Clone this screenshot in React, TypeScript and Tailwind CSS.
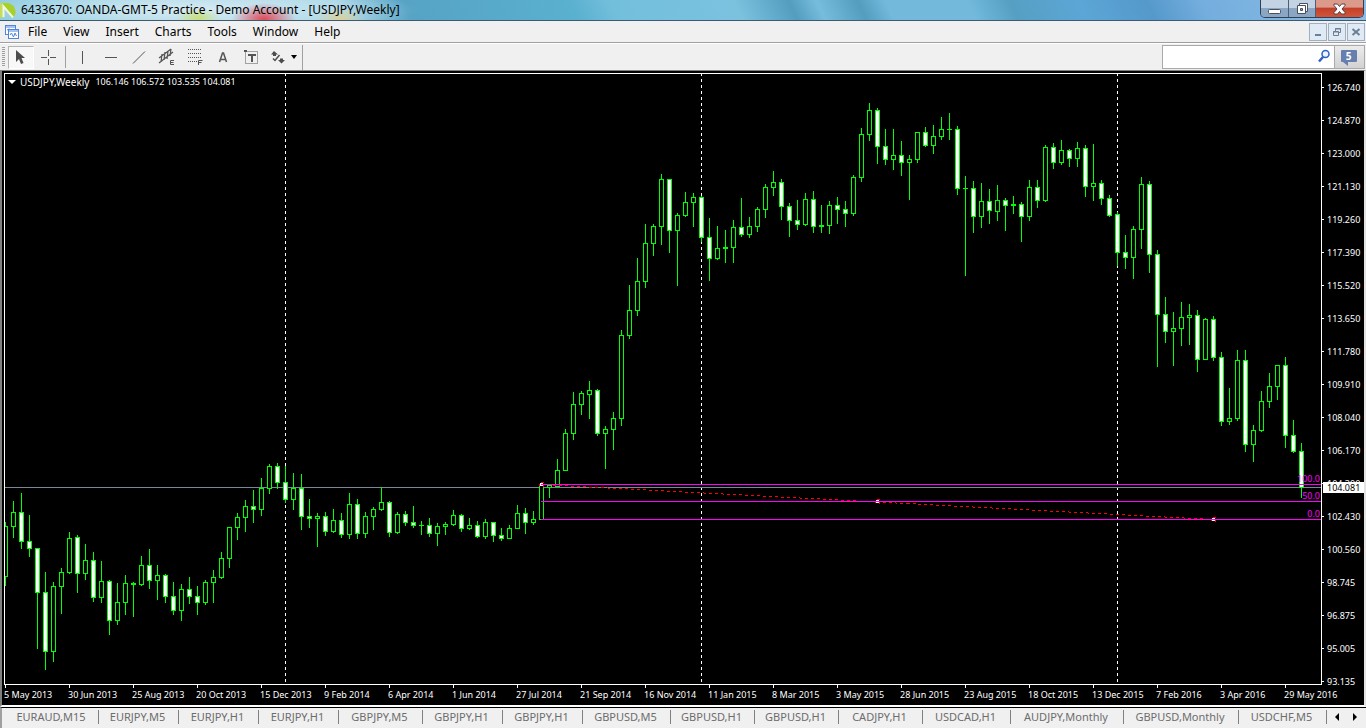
import React from 'react';

interface Tab {
    label: string;
    width: string;
}

// [high, bodyTop, bodyBottom, low, bearish] in chart rows
type Candle = [number, number, number, number, number];

const CANDLES: Candle[] = [
    [522, 526, 577, 586, 0], [501, 512, 527, 538, 0], [493, 512, 542, 549, 1], [515, 541, 549, 557, 1],
    [548, 548, 593, 649, 1], [572, 592, 652, 670, 1], [582, 586, 652, 662, 0], [568, 572, 587, 614, 0],
    [532, 538, 573, 574, 0], [535, 537, 574, 593, 1], [544, 560, 574, 580, 0], [552, 560, 598, 602, 1],
    [561, 581, 598, 603, 0], [580, 581, 621, 635, 1], [583, 602, 621, 625, 0], [575, 583, 603, 615, 0],
    [582, 583, 585, 617, 0], [556, 565, 585, 586, 0], [549, 565, 581, 589, 1], [565, 575, 581, 600, 0],
    [574, 575, 597, 603, 1], [582, 596, 611, 615, 1], [584, 589, 611, 621, 0], [577, 589, 597, 604, 1],
    [586, 596, 603, 615, 1], [580, 582, 603, 605, 0], [570, 577, 583, 603, 0], [552, 558, 578, 579, 0],
    [527, 527, 559, 568, 0], [513, 517, 528, 540, 0], [500, 506, 518, 532, 0], [490, 506, 510, 523, 1],
    [478, 488, 510, 516, 0], [464, 466, 489, 494, 0], [463, 466, 483, 489, 1], [466, 482, 500, 503, 1],
    [473, 488, 500, 510, 0], [474, 488, 517, 530, 1], [499, 516, 519, 528, 1], [513, 516, 519, 547, 0],
    [512, 516, 532, 536, 1], [509, 520, 532, 533, 0], [513, 520, 535, 538, 1], [493, 504, 535, 539, 0],
    [499, 504, 534, 539, 1], [512, 516, 534, 538, 0], [507, 509, 517, 530, 0], [487, 502, 510, 511, 0],
    [501, 502, 533, 537, 1], [512, 514, 533, 534, 0], [511, 514, 523, 526, 1], [506, 522, 526, 528, 1],
    [521, 525, 526, 535, 0], [518, 525, 534, 537, 1], [523, 526, 534, 546, 0], [522, 524, 527, 535, 0],
    [510, 515, 525, 526, 0], [514, 515, 529, 532, 1], [518, 525, 529, 530, 0], [521, 525, 537, 538, 1],
    [519, 522, 537, 539, 0], [522, 522, 536, 542, 1], [528, 535, 539, 541, 1], [525, 528, 539, 539, 0],
    [505, 513, 529, 529, 0], [508, 513, 523, 534, 1], [511, 519, 523, 525, 0], [484, 484, 520, 520, 0],
    [484, 485, 488, 498, 0], [459, 470, 487, 487, 0], [429, 433, 471, 471, 0], [392, 404, 434, 440, 0],
    [391, 393, 405, 415, 0], [381, 390, 395, 419, 0], [389, 390, 434, 436, 1], [426, 429, 434, 469, 0],
    [412, 418, 430, 450, 0], [330, 335, 419, 426, 0], [285, 310, 336, 339, 0], [258, 281, 311, 316, 0],
    [224, 243, 282, 288, 0], [224, 226, 244, 256, 0], [174, 179, 227, 245, 0], [179, 179, 231, 253, 1],
    [213, 215, 231, 286, 0], [192, 202, 216, 217, 0], [193, 197, 203, 227, 0], [196, 197, 238, 242, 1],
    [218, 237, 259, 281, 1], [226, 248, 259, 260, 0], [230, 247, 249, 263, 0], [220, 227, 248, 263, 0],
    [198, 227, 235, 237, 1], [217, 226, 235, 238, 0], [207, 209, 227, 232, 0], [184, 187, 210, 218, 0],
    [171, 182, 188, 196, 0], [179, 182, 207, 220, 1], [203, 206, 221, 237, 1], [200, 220, 225, 230, 1],
    [193, 199, 225, 226, 0], [191, 199, 227, 233, 1], [205, 225, 227, 233, 0], [201, 205, 226, 234, 0],
    [197, 205, 210, 224, 1], [201, 209, 214, 227, 1], [175, 177, 214, 216, 0], [128, 134, 178, 182, 0],
    [103, 110, 135, 141, 0], [108, 110, 147, 164, 1], [129, 146, 160, 165, 1], [129, 155, 160, 170, 0],
    [141, 155, 163, 176, 1], [155, 159, 163, 200, 0], [132, 132, 160, 163, 0], [127, 132, 146, 147, 1],
    [125, 136, 146, 154, 0], [117, 129, 137, 140, 0], [113, 129, 130, 140, 0], [126, 129, 189, 195, 1],
    [176, 188, 189, 276, 0], [181, 188, 217, 233, 1], [183, 201, 217, 228, 0], [189, 201, 211, 224, 1],
    [185, 200, 212, 221, 0], [198, 200, 206, 231, 1], [196, 204, 206, 214, 0], [202, 204, 217, 242, 1],
    [180, 187, 217, 221, 0], [180, 187, 201, 208, 1], [145, 147, 201, 202, 0], [143, 147, 163, 169, 1],
    [140, 150, 163, 165, 0], [149, 150, 159, 167, 1], [142, 148, 159, 167, 0], [145, 148, 187, 197, 1],
    [144, 183, 187, 201, 0], [180, 183, 199, 205, 1], [195, 198, 216, 217, 1], [212, 214, 253, 266, 1],
    [235, 252, 258, 269, 1], [226, 229, 258, 279, 0], [177, 184, 230, 249, 0], [181, 184, 255, 273, 1],
    [250, 254, 315, 367, 1], [297, 314, 332, 343, 1], [312, 328, 332, 366, 0], [302, 317, 329, 346, 0],
    [304, 315, 318, 345, 0], [310, 315, 360, 372, 1], [318, 319, 360, 360, 0], [316, 319, 358, 361, 1],
    [352, 357, 422, 426, 1], [388, 418, 422, 425, 0], [350, 360, 419, 421, 0], [350, 360, 445, 452, 1],
    [425, 430, 445, 462, 0], [391, 401, 431, 432, 0], [373, 386, 402, 408, 0], [365, 365, 387, 400, 0],
    [357, 365, 436, 448, 1], [420, 435, 452, 453, 1], [443, 451, 488, 498, 1],
];

const MENUS = ['File', 'View', 'Insert', 'Charts', 'Tools', 'Window', 'Help'];

const PRICES = [
    '126.740', '124.870', '123.000', '121.130', '119.260', '117.390', '115.520', '113.650', '111.780', '109.910',
    '108.040', '106.170', '104.300', '102.430', '100.560', '98.745', '96.875', '95.005', '93.135',
];

const DATES = [
    '5 May 2013', '30 Jun 2013', '25 Aug 2013', '20 Oct 2013', '15 Dec 2013', '9 Feb 2014', '6 Apr 2014',
    '1 Jun 2014', '27 Jul 2014', '21 Sep 2014', '16 Nov 2014', '11 Jan 2015', '8 Mar 2015', '3 May 2015',
    '28 Jun 2015', '23 Aug 2015', '18 Oct 2015', '13 Dec 2015', '7 Feb 2016', '3 Apr 2016', '29 May 2016',
];

const TABS: Tab[] = [
    { label: 'EURAUD,M15', width: 'w-[93px]' },
    { label: 'EURJPY,M5', width: 'w-[80px]' },
    { label: 'EURJPY,H1', width: 'w-[80px]' },
    { label: 'EURJPY,H1', width: 'w-[80px]' },
    { label: 'GBPJPY,M5', width: 'w-[84px]' },
    { label: 'GBPJPY,H1', width: 'w-[80px]' },
    { label: 'GBPJPY,H1', width: 'w-[80px]' },
    { label: 'GBPUSD,M5', width: 'w-[88px]' },
    { label: 'GBPUSD,H1', width: 'w-[84px]' },
    { label: 'GBPUSD,H1', width: 'w-[84px]' },
    { label: 'CADJPY,H1', width: 'w-[84px]' },
    { label: 'USDCAD,H1', width: 'w-[88px]' },
    { label: 'AUDJPY,Monthly', width: 'w-[113px]' },
    { label: 'GBPUSD,Monthly', width: 'w-[115px]' },
    { label: 'USDCHF,M5', width: 'w-[88px]' },
];

const TitleBar: React.FC = () => (
    <header className="flex h-[21px] shrink-0 items-start border-b border-[#3c5a70] bg-[linear-gradient(65deg,#8ccbe0_0%,#a9d6e6_15%,#a5d5e6_25%,#56a3c5_30%,#5ab0cf_42%,#72bfdc_45%,#7bc2df_54%,#549dbf_58%,#76bcdc_60%,#549dbf_63%,#72b9dc_65%,#72b9dc_71%,#569fc3_74%,#5ba6d6_79%,#5599cb_84%,#74aede_88%,#8dbde4_100%)] pr-[2px]">
        <div className="flex h-5 flex-1 items-center bg-[radial-gradient(ellipse_22px_10px_at_198px_18px,#c9df7a,transparent),radial-gradient(ellipse_32px_16px_at_264px_19px,#e04a5a,transparent),radial-gradient(ellipse_24px_10px_at_340px_18px,#d9cf9c,transparent),radial-gradient(ellipse_230px_22px_at_190px_10px,#e2f1f7cc,transparent)]">
            <svg width="16" height="20" viewBox="0 0 16 20" className="mr-[5px]">
                <path d="M0 3.500C7 1 15 4 15.500 11C16 14 14 17 12 18L3 7.500V18L0 17z" fill="#a9cf2a" />
                <path d="M0 3.500L3 3v15l-3-1z" fill="#c2de5c" />
                <path d="M3.500 17V6.500L13 17.500" fill="none" stroke="#f2f8e4" strokeWidth="2" />
            </svg>
            <h1 className="whitespace-nowrap font-['Noto_Sans'] text-[12px] leading-5 text-black">
                6433670: OANDA-GMT-5 Practice - Demo Account - [USDJPY,Weekly]
            </h1>
        </div>
        <div className="flex h-[18px] w-[104px] overflow-hidden rounded-b-[5px] border border-t-0 border-[#2e3f56]">
            <button aria-label="Minimize" className="flex w-7 items-center justify-center border-r border-[#4b5f78] bg-linear-to-b from-[#c3d3e3] from-45% to-[#8ba6c2] to-50%">
                <svg width="13" height="14" viewBox="0 0 13 14">
                    <rect x="0.5" y="7.5" width="12" height="4" rx="1" fill="#fff" stroke="#4a4f5c" />
                </svg>
            </button>
            <button aria-label="Restore" className="flex w-[27px] items-center justify-center border-r border-[#4b5f78] bg-linear-to-b from-[#c3d3e3] from-45% to-[#8ba6c2] to-50%">
                <svg width="13" height="14" viewBox="0 0 13 14">
                    <path d="M3.500 1.500h8v8h-8z" fill="#fff" stroke="#4a4f5c" />
                    <path d="M1.500 3.500h8v8h-8z" fill="#fff" stroke="#4a4f5c" />
                    <path d="M4.500 6.500h2v2h-2z" fill="#8ba6c2" stroke="#4a4f5c" />
                </svg>
            </button>
            <button aria-label="Close" className="flex flex-1 items-center justify-center bg-linear-to-b from-[#dc9a8b] from-40% via-[#c3402a] via-50% to-[#d0553a]">
                <svg width="13" height="12" viewBox="0 0 13 12">
                    <path d="M1 1h3.500L6.500 3.500 8.500 1H12v1.500L9 6l3 3.500V11H8.500l-2-2.500L4.500 11H1V9.500L4 6 1 2.500z" fill="#fff" stroke="#53404a" />
                </svg>
            </button>
        </div>
    </header>
);

const MenuBar: React.FC = () => (
    <nav className="flex h-[22px] shrink-0 items-center border-b border-[#a0a0a0] bg-[#f0f0f0] pl-[5px] pr-px">
        <svg width="14" height="14" viewBox="0 0 14 14" fill="none" stroke="#4f86dc">
            <rect x="0.500" y="0.500" width="10" height="9" fill="#fff" />
            <path d="M1 2h9M2 5l2-1 2 1" />
            <rect x="3.500" y="4.500" width="10" height="9" fill="#fff" />
            <path d="M4 6h9M5 10l1.500-2 2 4 1.500-4 1.500 3" />
        </svg>
        <ul className="flex flex-1 pl-[9px] font-['Noto_Sans'] text-[12px] leading-5 text-black">
            {MENUS.map((menu) => (
                <li key={menu} className="pr-4">
                    <button className="block">{menu}</button>
                </li>
            ))}
        </ul>
        <div className="flex gap-px">
            <button aria-label="Minimize chart" className="flex h-[18px] w-[18px] items-center justify-center border border-[#9fb0c2] bg-[#dfeaf5]">
                <svg width="12" height="12" viewBox="0 0 12 12">
                    <path d="M3 9h6" stroke="#6b7f95" strokeWidth="2" />
                </svg>
            </button>
            <button aria-label="Restore chart" className="flex h-[18px] w-[18px] items-center justify-center border border-[#9fb0c2] bg-[#dfeaf5]">
                <svg width="12" height="12" viewBox="0 0 12 12" fill="none" stroke="#6b7f95">
                    <path d="M4.500 5V2.500h5v4H8M4 3h6" />
                    <path d="M2.500 5.500h5v4h-5zM2 6h6" />
                </svg>
            </button>
            <button aria-label="Close chart" className="flex h-[18px] w-[18px] items-center justify-center border border-[#9fb0c2] bg-[#dfeaf5]">
                <svg width="12" height="12" viewBox="0 0 12 12">
                    <path d="M2.500 3l7 6M9.500 3l-7 6" stroke="#6b7f95" strokeWidth="2" />
                </svg>
            </button>
        </div>
    </nav>
);

interface ToolProps {
    label: string;
    active?: boolean;
    children: React.ReactNode;
}

const Tool: React.FC<ToolProps> = ({ label, active, children }) => (
    <button
        aria-label={label}
        className={`flex h-[23px] items-center justify-center ${active
            ? 'w-[26px] border border-[#b4b4b4] border-r-white border-b-white bg-[#f8f8f8]'
            : 'w-7'
            }`}
    >
        <svg width="18" height="18" viewBox="0 0 18 18" fill="none" stroke="#555">
            {children}
        </svg>
    </button>
);

const Toolbar: React.FC = () => (
    <div className="flex h-[27px] shrink-0 items-center border-t border-white bg-[#f0f0f0] pr-px">
        <div className="flex h-[25px] items-center border-r border-[#a0a0a0] pl-[2px] pr-px">
            <svg width="3" height="20" viewBox="0 0 3 20" className="mr-[3px]">
                <path d="M1.500 0v20" stroke="#a0a0a0" strokeWidth="3" strokeDasharray="1 1" />
            </svg>
            <Tool label="Cursor" active>
                <path d="M4 2v12l3-3 2 5 2.500-1-2-5H13z" fill="#4d4d4d" stroke="none" />
            </Tool>
            <Tool label="Crosshair">
                <path d="M9.500 2v6M9.500 11v6M2 9.500h6M11 9.500h6" />
            </Tool>
            <div className="mx-[3px] h-[22px] w-px bg-[#a0a0a0]" />
            <Tool label="Vertical line">
                <path d="M8.500 3v13" />
            </Tool>
            <Tool label="Horizontal line">
                <path d="M3 9.500h12" />
            </Tool>
            <Tool label="Trendline">
                <path d="M3 15.500L15 3.500" />
            </Tool>
            <Tool label="Equidistant channel">
                <path d="M1 10L13 1M1 15L15 4M4 6l-1 8M7 4L6 12M10 3L9 11M13 1l-1 7" strokeWidth="1.250" />
                <path d="M16 12.500h-3.500v4H16M12.500 14.500h3" />
            </Tool>
            <Tool label="Fibonacci retracement">
                <path d="M2 1.500h14M2 5.500h14M2 9.500h14M2 13.500h9" strokeDasharray="1 1" />
                <path d="M12.500 17v-4.500h4M12.500 14.500h3" />
            </Tool>
            <Tool label="Text">
                <path d="M5.500 14L8.500 5h1l3 9M6.500 11.500h5" strokeWidth="1.500" />
            </Tool>
            <Tool label="Text label">
                <path d="M3.500 3.500h12v12h-12z" strokeDasharray="1 1" />
                <path d="M2 2h3v2H2z" fill="#555" stroke="none" />
                <path d="M6 7h8M10 7v7" strokeWidth="2" />
            </Tool>
            <button aria-label="Arrows" className="flex h-[23px] w-9 items-center justify-center gap-[5px]">
                <svg width="16" height="16" viewBox="0 0 16 16">
                    <path d="M4 2l4 3.500H6V7H3V5.500H1z" fill="#4d4d4d" />
                    <path d="M3 9.500l2 2L9.500 6" fill="none" stroke="#4d4d4d" strokeWidth="1.500" />
                    <path d="M8 11h2V9.500h3V11h2l-3.500 3.500z" fill="#4d4d4d" />
                </svg>
                <svg width="6" height="4" viewBox="0 0 6 4">
                    <path d="M0 0h6L3 4z" fill="#000" />
                </svg>
            </button>
        </div>
        <div className="ml-auto flex h-6 border border-[#a9a9a9]">
            <label className="flex items-center bg-white">
                <input aria-label="Search" className="h-full w-[154px] bg-white px-1 text-[12px] outline-none" />
                <svg width="17" height="16" viewBox="0 0 17 16" fill="none" stroke="#2f5fc4">
                    <circle cx="8.500" cy="5" r="3.500" fill="#eaf3ff" strokeWidth="1.500" />
                    <path d="M6 8l-4 4.500" strokeWidth="2.500" />
                </svg>
            </label>
            <button aria-label="Messages" className="flex w-[30px] items-center justify-center border-l border-[#a9a9a9] bg-linear-to-b from-[#ececec] to-[#d2d2d2] pb-[3px] pr-[2px]">
                <span className="relative flex h-3 w-4 items-center justify-center rounded-[1px] bg-[#667fae] font-['Noto_Sans'] text-[10px] font-bold leading-3 text-white">
                    5
                    <svg width="5" height="4" viewBox="0 0 5 4" className="absolute left-[2px] top-3">
                        <path d="M0 0h5v4z" fill="#667fae" />
                    </svg>
                </span>
            </button>
        </div>
    </div>
);

const Anchor: React.FC<{ x: number; y: number }> = ({ x, y }) => (
    <g>
        <path d={`M${x - 2} ${y + 2}v-2M${x} ${y - 2}h3M${x + 2} ${y + 1}v2`} stroke="#f00" />
        <rect x={x - 1} y={y - 1} width="3" height="3" fill="#fff" />
    </g>
);

const PlotArea: React.FC = () => (
    <svg width="1316" height="610" viewBox="5 74 1316 610" shapeRendering="crispEdges" className="block">
        {[285, 701, 1117].map((x) => (
            <path key={x} d={`M${x + 0.5} 73V684`} stroke="#fff" strokeDasharray="3 3" />
        ))}
        <path d="M5 487.500H1321" stroke="#778899" />
        {CANDLES.map(([high, top, bottom, low, bearish], i) => {
            const x = 5 + i * 8;
            return (
                <g key={i}>
                    <rect x={x} y={high} width="1" height={low - high} fill="#0f0" />
                    <rect x={x - 2} y={top} width="5" height={bottom - top} fill="#0f0" />
                    {bottom - top > 2 && (
                        <rect x={x - 1} y={top + 1} width="3" height={bottom - top - 2} fill={bearish ? '#fff' : '#000'} />
                    )}
                </g>
            );
        })}
        <path d="M541 484.500L1213 519.500" stroke="#f00" strokeDasharray="3 3" />
        <Anchor x={541} y={484} />
        <Anchor x={877} y={501} />
        <Anchor x={1213} y={519} />
        <path d="M541 484.500H1321M541 501.500H1321M541 519.500H1321" stroke="#f0f" />
        <g fill="#f0f" textAnchor="end" className="font-['Noto_Sans'] text-[9px]">
            <text x="1320" y="482">100.0</text>
            <text x="1320" y="499">50.0</text>
            <text x="1320" y="517">0.0</text>
        </g>
    </svg>
);

const Chart: React.FC = () => (
    <main className="flex min-h-0 flex-1 flex-col overflow-hidden border-b-2 border-l-2 border-r-2 border-t border-[#808080] border-b-white border-r-[#e3e3e3] bg-black pl-[2px] font-['Noto_Sans'] text-[9px] text-white">
        <div className="flex">
            <section className="relative mt-[2px] min-w-0 flex-1 overflow-hidden border border-white">
                <PlotArea />
                <div className="absolute left-[3px] top-0 flex items-center text-[10px] leading-4">
                    <svg width="8" height="4" viewBox="0 0 8 4" className="mr-1">
                        <path d="M0 0h8L4 4z" fill="#fff" />
                    </svg>
                    <span className="mr-[6px]">USDJPY,Weekly</span>
                    <span className="text-[9px]">106.146 106.572 103.535 104.081</span>
                </div>
            </section>
            <aside className="relative h-[613px] w-[42px]">
                <ul>
                    {PRICES.map((price) => (
                        <li key={price} className="flex h-[33px] items-center gap-[3px]">
                            <span className="h-px w-[2px] bg-white" />
                            {price}
                        </li>
                    ))}
                </ul>
                <span className="absolute left-px right-0 top-[411px] bg-white pl-1 leading-[11px] text-black">104.081</span>
            </aside>
        </div>
        <ul className="flex">
            {DATES.map((date) => (
                <li key={date} className="w-16 shrink-0 whitespace-nowrap leading-[14px]">
                    <span className="ml-px block h-[3px] w-px bg-white" />
                    {date}
                </li>
            ))}
        </ul>
    </main>
);

const ChartTabs: React.FC = () => (
    <footer className="flex h-[21px] shrink-0 items-start border-l-2 border-t border-l-[#a0a0a0] border-t-black bg-[#f0f0f0] pl-[4px] pt-[2px]">
        {TABS.map((tab, i) => (
            <button
                key={i}
                className={`${tab.width} h-[14px] shrink-0 border-r border-[#808080] pr-[2px] text-center font-['Noto_Sans'] text-[11px] leading-[14px] text-[#6d6d6d]`}
            >
                {tab.label}
            </button>
        ))}
        <div className="flex h-[14px] flex-1 items-center justify-between pl-2 pr-[9px]">
            <button aria-label="Scroll tabs left">
                <svg width="4" height="8" viewBox="0 0 4 8">
                    <path d="M4 0v8L0 4z" />
                </svg>
            </button>
            <button aria-label="Scroll tabs right">
                <svg width="4" height="8" viewBox="0 0 4 8">
                    <path d="M0 0v8l4-4z" />
                </svg>
            </button>
        </div>
    </footer>
);

const App: React.FC = () => (
    <div className="flex h-screen flex-col overflow-hidden bg-[#f0f0f0]">
        <TitleBar />
        <MenuBar />
        <Toolbar />
        <Chart />
        <ChartTabs />
    </div>
);

export default App;
